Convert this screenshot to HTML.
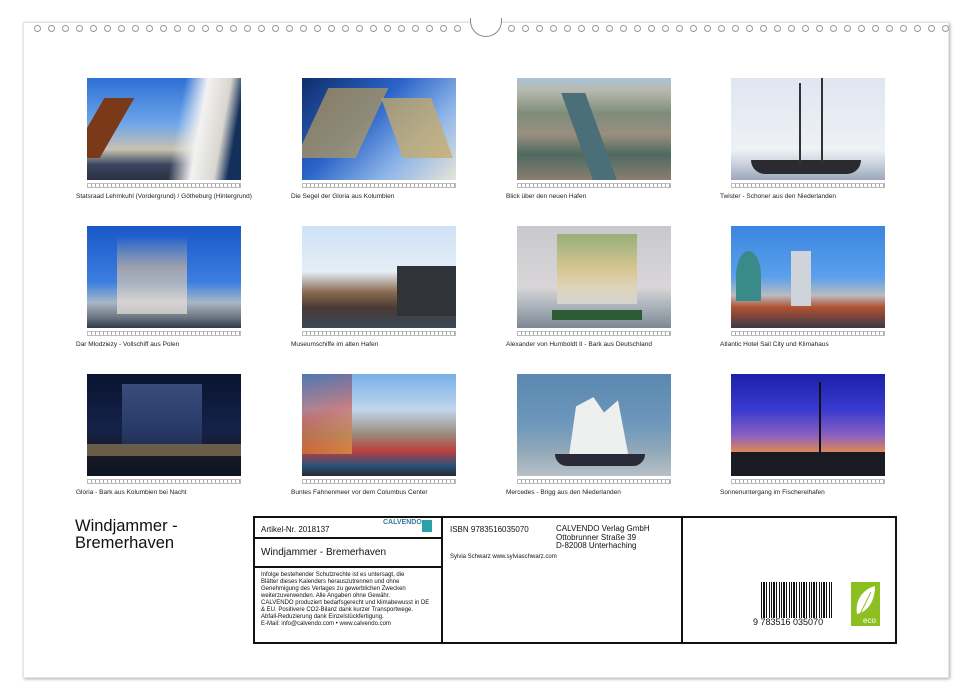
<!DOCTYPE html>
<html><head><meta charset="utf-8"><style>
*{margin:0;padding:0;box-sizing:border-box}
body{width:971px;height:700px;background:#fff;position:relative;overflow:hidden;font-family:"Liberation Sans",sans-serif;color:#111}
.sheet{position:absolute;left:23px;top:22px;width:926px;height:656px;background:#fff;box-shadow:1px 1px 3px #aaa;border:1px solid #e4e4e4}
.hole{position:absolute;top:25px;width:7px;height:7px;border:1px solid #999;border-radius:50%;background:#fff}
.arch{position:absolute;left:470px;top:18px;width:32px;height:19px;border:1px solid #888;border-top:none;border-radius:0 0 16px 16px;background:#fff}
.ph{position:absolute;width:154px;height:102px;overflow:hidden}
.strip{position:absolute;width:154px;height:5px;border:1px solid #bbb;background:repeating-linear-gradient(90deg,#fff 0 3px,#aaa 3px 4px)}
.cap{position:absolute;font-size:6.5px;color:#222;white-space:nowrap}
.box{position:absolute;left:253px;top:516px;width:644px;height:128px;border:2px solid #111}
.t{position:absolute;white-space:nowrap}
</style></head><body>
<div class="sheet"></div>
<div id="holes"></div>
<div class="arch"></div>
<script>
var h='';for(var x=34;x<465;x+=14)h+='<div class="hole" style="left:'+x+'px"></div>';
for(var x=508;x<945;x+=14)h+='<div class="hole" style="left:'+x+'px"></div>';
document.getElementById('holes').innerHTML=h;
</script>
<div class="ph" style="left:87px;top:78px;background:linear-gradient(180deg,#2d6fd6 0%,#6fa6e8 45%,#c9c2b0 70%,#3a4660 85%,#2a3040 100%)"><div style="position:absolute;left:80px;top:0;width:74px;height:102px;background:linear-gradient(100deg,transparent 20%,#f2f2f2 45%,#d9d6cf 70%,#14305a 85%)"></div><div style="position:absolute;left:0;top:20px;width:30px;height:60px;background:#7a3a1a;transform:skewX(-30deg)"></div></div>
<div class="ph" style="left:302px;top:78px;background:linear-gradient(135deg,#0f2d6a 0%,#2a64c8 40%,#8cb4e8 70%,#e8e4d8 100%)"><div style="position:absolute;left:10px;top:10px;width:60px;height:70px;background:#b89a58;opacity:.7;transform:skewX(-25deg)"></div><div style="position:absolute;left:90px;top:20px;width:50px;height:60px;background:#c7a965;opacity:.75;transform:skewX(20deg)"></div></div>
<div class="ph" style="left:517px;top:78px;background:linear-gradient(180deg,#a9c3dc 0%,#b8b9ae 12%,#7f8c7a 35%,#9a8f80 55%,#4f6a60 75%,#8a7e70 100%)"><div style="position:absolute;left:60px;top:15px;width:24px;height:87px;background:#4a6f78;transform:skewX(20deg)"></div></div>
<div class="ph" style="left:731px;top:78px;background:linear-gradient(180deg,#dfe6f0 0%,#eef2f6 70%,#c8d0dc 85%,#9aa8b8 100%)"><div style="position:absolute;left:20px;top:82px;width:110px;height:14px;background:#2a2a30;border-radius:0 0 40px 40px"></div><div style="position:absolute;left:68px;top:5px;width:2px;height:80px;background:#333"></div><div style="position:absolute;left:90px;top:0;width:2px;height:85px;background:#333"></div></div>

<div class="ph" style="left:87px;top:226px;background:linear-gradient(180deg,#1a57c8 0%,#3c7ee0 55%,#a8b8c8 75%,#6a7480 90%,#2f3a4a 100%)"><div style="position:absolute;left:30px;top:10px;width:70px;height:78px;background:linear-gradient(180deg,transparent,#c9b49a 40%,#e8e0d6 85%);opacity:.7"></div></div>
<div class="ph" style="left:302px;top:226px;background:linear-gradient(180deg,#cfe2f6 0%,#e4eef6 45%,#8a6a50 65%,#4a3a34 80%,#3a4858 100%)"><div style="position:absolute;left:95px;top:40px;width:59px;height:50px;background:#303438"></div></div>
<div class="ph" style="left:517px;top:226px;background:linear-gradient(180deg,#c9c8cc 0%,#d8d6d8 60%,#a8b0b8 80%,#7e8894 100%)"><div style="position:absolute;left:40px;top:8px;width:80px;height:70px;background:linear-gradient(180deg,#7aa04a,#d9c070 50%,#e8e4dc);opacity:.65"></div><div style="position:absolute;left:35px;top:84px;width:90px;height:10px;background:#2c5a34"></div></div>
<div class="ph" style="left:731px;top:226px;background:linear-gradient(180deg,#3a86e0 0%,#5aa0ec 50%,#b8bcc0 68%,#b05030 80%,#3a3a48 100%)"><div style="position:absolute;left:5px;top:25px;width:25px;height:50px;background:#3a8a8a;border-radius:50% 50% 0 0"></div><div style="position:absolute;left:60px;top:25px;width:20px;height:55px;background:#cfd4da"></div></div>

<div class="ph" style="left:87px;top:374px;background:linear-gradient(180deg,#0a1430 0%,#14224a 55%,#1a1a22 75%,#0e1424 100%)"><div style="position:absolute;left:35px;top:10px;width:80px;height:60px;background:linear-gradient(180deg,#5a70a8,#2a3c70);opacity:.6"></div><div style="position:absolute;left:0;top:70px;width:154px;height:12px;background:#b8a070;opacity:.5"></div></div>
<div class="ph" style="left:302px;top:374px;background:linear-gradient(180deg,#7ab0e8 0%,#c0d6ec 35%,#9a8878 60%,#c04040 75%,#28507a 90%,#2a2a34 100%)"><div style="position:absolute;left:0;top:0;width:50px;height:80px;background:linear-gradient(160deg,#2a4a8a,#c83a30,#e8c040);opacity:.55"></div></div>
<div class="ph" style="left:517px;top:374px;background:linear-gradient(180deg,#5a88b0 0%,#6e98bc 50%,#90a8b8 75%,#b8c0c8 100%)"><div style="position:absolute;left:45px;top:20px;width:70px;height:62px;background:#eef0f0;clip-path:polygon(10% 100%,20% 20%,45% 5%,60% 30%,80% 10%,95% 100%)"></div><div style="position:absolute;left:38px;top:80px;width:90px;height:12px;background:#2a2a38;border-radius:0 0 30px 30px"></div></div>
<div class="ph" style="left:731px;top:374px;background:linear-gradient(180deg,#1a20a8 0%,#3a3ad0 35%,#8a60c0 60%,#f09040 80%,#3a2a20 88%,#141418 100%)"><div style="position:absolute;left:88px;top:8px;width:2px;height:80px;background:#111"></div><div style="position:absolute;left:0;top:78px;width:154px;height:24px;background:#1a1a22"></div></div>

<div class="strip" style="left:87px;top:183px"></div><div class="strip" style="left:302px;top:183px"></div><div class="strip" style="left:517px;top:183px"></div><div class="strip" style="left:731px;top:183px"></div>
<div class="strip" style="left:87px;top:331px"></div><div class="strip" style="left:302px;top:331px"></div><div class="strip" style="left:517px;top:331px"></div><div class="strip" style="left:731px;top:331px"></div>
<div class="strip" style="left:87px;top:479px"></div><div class="strip" style="left:302px;top:479px"></div><div class="strip" style="left:517px;top:479px"></div><div class="strip" style="left:731px;top:479px"></div>

<div class="cap" style="left:76px;top:193px">Statsraad Lehmkuhl (Vordergrund) / Götheburg (Hintergrund)</div>
<div class="cap" style="left:291px;top:193px">Die Segel der Gloria aus Kolumbien</div>
<div class="cap" style="left:506px;top:193px">Blick über den neuen Hafen</div>
<div class="cap" style="left:720px;top:193px">Twister - Schoner aus den Niederlanden</div>
<div class="cap" style="left:76px;top:341px">Dar Mlodziezy - Vollschiff aus Polen</div>
<div class="cap" style="left:291px;top:341px">Museumschiffe im alten Hafen</div>
<div class="cap" style="left:506px;top:341px">Alexander von Humboldt II - Bark aus Deutschland</div>
<div class="cap" style="left:720px;top:341px">Atlantic Hotel Sail City und Klimahaus</div>
<div class="cap" style="left:76px;top:489px">Gloria - Bark aus Kolumbien bei Nacht</div>
<div class="cap" style="left:291px;top:489px">Buntes Fahnenmeer vor dem Columbus Center</div>
<div class="cap" style="left:506px;top:489px">Mercedes - Brigg aus den Niederlanden</div>
<div class="cap" style="left:720px;top:489px">Sonnenuntergang im Fischereihafen</div>

<div class="t" style="left:75px;top:518px;font-size:16.5px;line-height:17px">Windjammer -<br>Bremerhaven</div>

<div class="box"></div>
<div style="position:absolute;left:441px;top:516px;width:2px;height:128px;background:#111"></div>
<div style="position:absolute;left:681px;top:516px;width:2px;height:128px;background:#111"></div>
<div style="position:absolute;left:253px;top:537px;width:189px;height:2px;background:#111"></div>
<div style="position:absolute;left:253px;top:566px;width:189px;height:2px;background:#111"></div>
<div class="t" style="left:261px;top:525px;font-size:8px">Artikel-Nr. 2018137</div>
<div class="t" style="left:383px;top:519px;font-size:7px;color:#3a7a9a;font-weight:bold">CALVENDO</div>
<div style="position:absolute;left:422px;top:520px;width:10px;height:12px;background:#2aa0a8"></div>
<div class="t" style="left:261px;top:547px;font-size:10px">Windjammer - Bremerhaven</div>
<div class="t" style="left:261px;top:572px;font-size:6px;line-height:7px">Infolge bestehender Schutzrechte ist es untersagt, die<br>Blätter dieses Kalenders herauszutrennen und ohne<br>Genehmigung des Verlages zu gewerblichen Zwecken<br>weiterzuverwenden. Alle Angaben ohne Gewähr.<br>CALVENDO produziert bedarfsgerecht und klimabewusst in DE<br>&amp; EU. Positivere CO2-Bilanz dank kurzer Transportwege.<br>Abfall-Reduzierung dank Einzelstückfertigung.<br>E-Mail: info@calvendo.com • www.calvendo.com</div>
<div class="t" style="left:450px;top:525px;font-size:8px">ISBN 9783516035070</div>
<div class="t" style="left:556px;top:525px;font-size:8px;line-height:8.5px">CALVENDO Verlag GmbH<br>Ottobrunner Straße 39<br>D-82008 Unterhaching</div>
<div class="t" style="left:450px;top:554px;font-size:6px">Sylvia Schwarz www.sylviaschwarz.com</div>
<div style="position:absolute;left:761px;top:582px;width:71px;height:36px;background:repeating-linear-gradient(90deg,#111 0 1px,#fff 1px 2px,#111 2px 4px,#fff 4px 5px,#111 5px 6px,#fff 6px 8px,#111 8px 9px,#fff 9px 10px)"></div>
<div style="position:absolute;left:762px;top:618px;width:70px;height:10px;background:#fff"></div>
<div class="t" style="left:753px;top:617px;font-size:9px">9 783516 035070</div>
<div style="position:absolute;left:851px;top:582px;width:29px;height:44px;background:#8cc020"></div>
<svg style="position:absolute;left:851px;top:582px" width="29" height="44"><path d="M24 4 C10 8 4 20 6 32 C16 30 24 20 24 4Z" fill="#fff"/><path d="M20 10 L8 34" stroke="#8cc020" stroke-width="1"/><text x="12" y="41" font-size="8" fill="#fff" font-family="Liberation Sans">eco</text></svg>
</body></html>
